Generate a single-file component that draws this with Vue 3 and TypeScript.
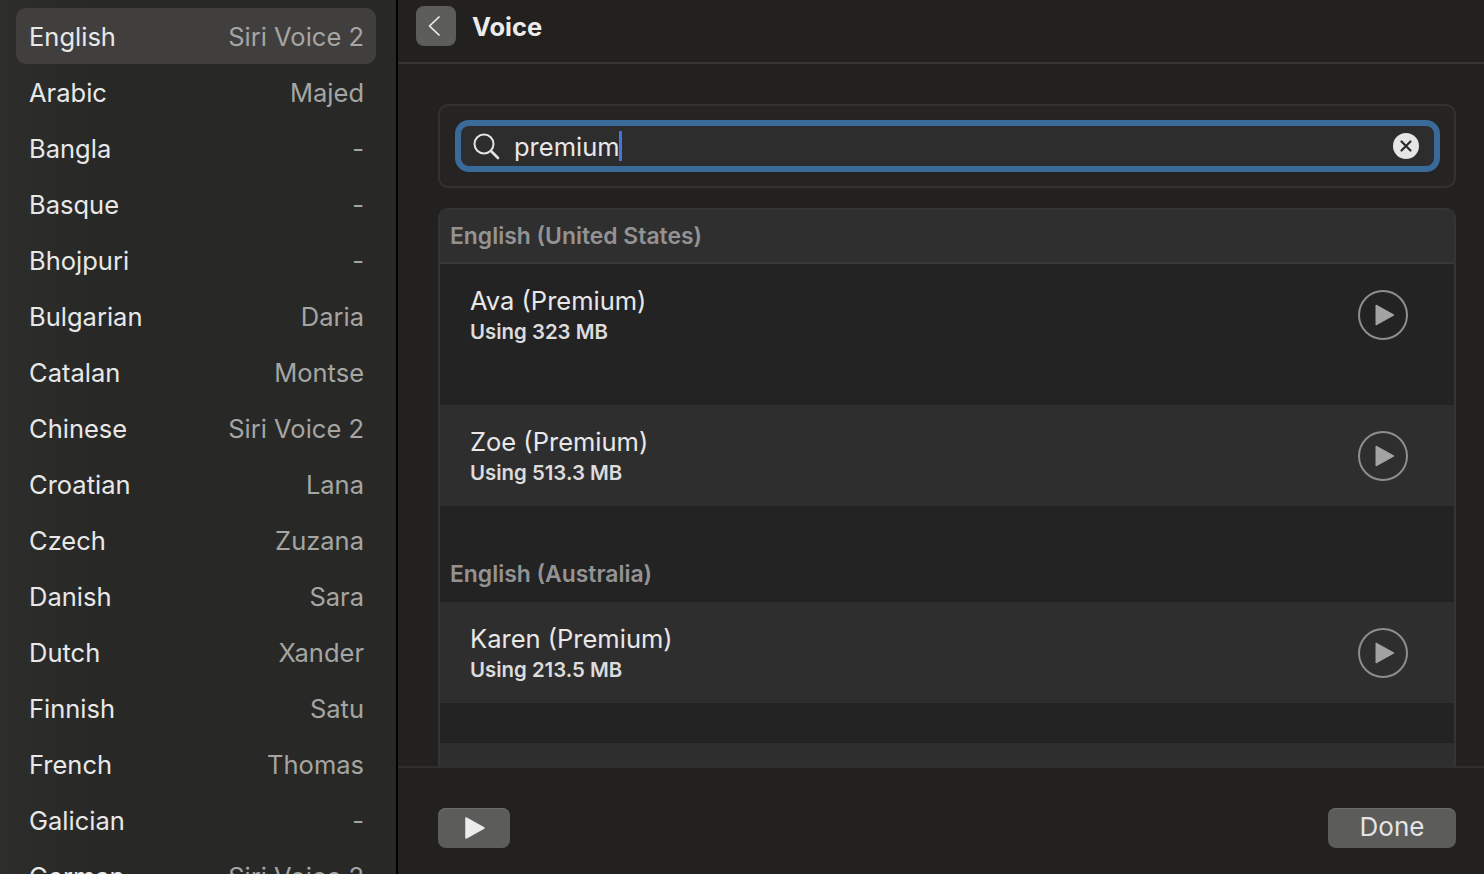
<script setup lang="ts">
interface Language {
  name: string
  voice: string
}

interface Voice {
  name: string
  size: string
  tall?: boolean
  alt?: boolean
}

const languages: Language[] = [
  { name: 'English', voice: 'Siri Voice 2' },
  { name: 'Arabic', voice: 'Majed' },
  { name: 'Bangla', voice: '-' },
  { name: 'Basque', voice: '-' },
  { name: 'Bhojpuri', voice: '-' },
  { name: 'Bulgarian', voice: 'Daria' },
  { name: 'Catalan', voice: 'Montse' },
  { name: 'Chinese', voice: 'Siri Voice 2' },
  { name: 'Croatian', voice: 'Lana' },
  { name: 'Czech', voice: 'Zuzana' },
  { name: 'Danish', voice: 'Sara' },
  { name: 'Dutch', voice: 'Xander' },
  { name: 'Finnish', voice: 'Satu' },
  { name: 'French', voice: 'Thomas' },
  { name: 'Galician', voice: '-' },
  { name: 'German', voice: 'Siri Voice 2' }
]

const usVoices: Voice[] = [
  { name: 'Ava (Premium)', size: 'Using 323 MB', tall: true },
  { name: 'Zoe (Premium)', size: 'Using 513.3 MB', alt: true }
]

const auVoices: Voice[] = [{ name: 'Karen (Premium)', size: 'Using 213.5 MB', alt: true }]
</script>

<template>
  <div class="window">
    <aside class="sidebar">
      <div
        v-for="(lang, i) in languages"
        :key="lang.name"
        class="lang-row"
        :class="{ selected: i === 0 }"
      >
        <span class="lang-name">{{ lang.name }}</span>
        <span class="lang-voice">{{ lang.voice }}</span>
      </div>
    </aside>

    <main class="main">
      <header class="topbar">
        <button class="back-btn" type="button">
          <svg width="14" height="24" viewBox="0 0 14 24" fill="none">
            <path d="M12 3 L2.5 12 L12 21" stroke="#f0f0f0" stroke-width="1.7" stroke-linecap="round" stroke-linejoin="round" />
          </svg>
        </button>
        <h1>Voice</h1>
      </header>

      <div class="content">
        <div class="search-panel">
          <div class="search-field">
            <svg class="search-icon" width="28" height="28" viewBox="0 0 28 28" fill="none">
              <circle cx="12" cy="12" r="9.5" stroke="#e4e4e4" stroke-width="2" />
              <path d="M19 19 L26 26" stroke="#e4e4e4" stroke-width="2.6" stroke-linecap="round" />
            </svg>
            <span class="search-text">premium</span>
            <span class="caret"></span>
            <svg class="clear-icon" width="26" height="26" viewBox="0 0 26 26">
              <circle cx="13" cy="13" r="13" fill="#e6e6e6" />
              <path d="M8.5 8.5 L17.5 17.5 M17.5 8.5 L8.5 17.5" stroke="#2a2a2a" stroke-width="2.2" stroke-linecap="round" />
            </svg>
          </div>
        </div>

        <div class="voice-panel">
          <div class="group-head first">English (United States)</div>
          <div
            v-for="v in usVoices"
            :key="v.name"
            class="voice-row"
            :class="{ tall: v.tall, alt: v.alt }"
          >
            <div class="voice-info">
              <div class="voice-name">{{ v.name }}</div>
              <div class="voice-size">{{ v.size }}</div>
            </div>
            <button class="play-circle" type="button">
              <svg width="20" height="22" viewBox="0 0 20 22">
                <path d="M1 1 L19 11 L1 21 Z" fill="#a3a3a3" stroke="#a3a3a3" stroke-linejoin="round" />
              </svg>
            </button>
          </div>

          <div class="group-head">English (Australia)</div>
          <div v-for="v in auVoices" :key="v.name" class="voice-row alt">
            <div class="voice-info">
              <div class="voice-name">{{ v.name }}</div>
              <div class="voice-size">{{ v.size }}</div>
            </div>
            <button class="play-circle" type="button">
              <svg width="20" height="22" viewBox="0 0 20 22">
                <path d="M1 1 L19 11 L1 21 Z" fill="#a3a3a3" stroke="#a3a3a3" stroke-linejoin="round" />
              </svg>
            </button>
          </div>
          <div class="gap-row"></div>
          <div class="voice-row alt"></div>
        </div>
      </div>

      <footer class="footer">
        <button class="pill play-btn" type="button">
          <svg width="22" height="24" viewBox="0 0 22 24">
            <path d="M2 2 L20 12 L2 22 Z" fill="#ececec" stroke="#ececec" stroke-width="1.5" stroke-linejoin="round" />
          </svg>
        </button>
        <button class="pill done-btn" type="button">Done</button>
      </footer>
    </main>
  </div>
</template>

<style>
html,
body {
  margin: 0;
  background: #222120;
}
</style>

<style scoped>
.window {
  display: flex;
  width: 1484px;
  height: 874px;
  overflow: hidden;
  font-family: Inter, "Liberation Sans", sans-serif;
  color: #e8e8e8;
}

button {
  font-family: inherit;
  border: none;
  padding: 0;
}

.sidebar {
  flex: 0 0 396px;
  box-sizing: border-box;
  padding: 8px 20px 0 16px;
  height: 874px;
  overflow: hidden;
  background: linear-gradient(90deg, #2d2e2c 0%, #282927 25%, #282927 100%);
}

.lang-row {
  display: flex;
  align-items: center;
  justify-content: space-between;
  height: 56px;
  padding: 0 12px 0 13px;
  border-radius: 10px;
  font-size: 25.5px;
}

.lang-row.selected {
  background: #403f3e;
}

.lang-name {
  color: #e8e8e8;
}

.lang-voice {
  color: #a5a5a3;
}

.main {
  flex: 1;
  display: flex;
  flex-direction: column;
  min-width: 0;
  border-left: 2px solid #000;
  background: #222120;
}

.topbar {
  flex: 0 0 64px;
  box-sizing: border-box;
  display: flex;
  align-items: flex-start;
  padding: 6px 0 0 18px;
  gap: 16px;
  border-bottom: 2px solid #363534;
}

.back-btn {
  display: flex;
  align-items: center;
  justify-content: center;
  width: 40px;
  height: 40px;
  padding-right: 4px;
  border-radius: 8px;
  background: #5c5c5b;
}

h1 {
  margin: 1px 0 0;
  font-size: 25.5px;
  font-weight: 700;
  line-height: 40px;
  color: #ececec;
}

.content {
  flex: 0 0 704px;
  box-sizing: border-box;
  padding: 40px 28px 0 40px;
  overflow: hidden;
  border-bottom: 2px solid #302f2f;
}

.search-panel {
  box-sizing: border-box;
  height: 84px;
  padding: 14px 15px 0;
  border: 2px solid #333231;
  border-radius: 10px;
  background: #252423;
}

.search-field {
  box-sizing: border-box;
  display: flex;
  align-items: center;
  width: 985px;
  height: 52px;
  padding: 0 15px 0 11px;
  border: 6px solid #3a6a99;
  border-radius: 14px;
  background: #2e2d2d;
}

.search-field .search-icon {
  margin-right: 14px;
  flex: none;
}

.search-text {
  font-size: 25.5px;
  color: #e8e8e8;
}

.caret {
  width: 3px;
  height: 30px;
  margin-left: -1px;
  background: #3f76e0;
}

.clear-icon {
  margin-left: auto;
  flex: none;
}

.voice-panel {
  box-sizing: border-box;
  margin-top: 20px;
  min-height: 600px;
  border: 2px solid #363535;
  border-bottom: 0;
  border-radius: 10px 10px 0 0;
  background: #242324;
}

.group-head {
  display: flex;
  align-items: center;
  height: 96px;
  box-sizing: border-box;
  padding: 40px 10px 0;
  font-size: 22.9px;
  font-weight: 600;
  color: #949394;
}

.group-head.first {
  height: 54px;
  padding-top: 0;
  background: #302f30;
  border-bottom: 2px solid #393839;
}

.voice-row {
  box-sizing: border-box;
  display: flex;
  align-items: flex-start;
  justify-content: space-between;
  height: 101px;
  padding: 21px 46px 0 30px;
}

.voice-row.tall {
  height: 141px;
}

.voice-row.alt {
  background: #2f2e2f;
}

.gap-row {
  height: 40px;
}

.voice-name {
  font-size: 25.5px;
  line-height: 32px;
  color: #e8e8e8;
}

.voice-size {
  font-size: 20.4px;
  font-weight: 600;
  line-height: 28px;
  margin-top: 1px;
  color: #dcdcdc;
}

.play-circle {
  box-sizing: border-box;
  display: flex;
  align-items: center;
  justify-content: center;
  width: 50px;
  height: 50px;
  margin-top: 5px;
  padding-left: 3px;
  border: 2px solid #8e8e8e;
  border-radius: 50%;
  background: transparent;
}

.footer {
  flex: 1;
  display: flex;
  align-items: flex-start;
  justify-content: space-between;
  padding: 40px 28px 0 40px;
}

.pill {
  height: 40px;
  border-radius: 8px;
  background: #5c5c5b;
  box-shadow: inset 0 1px 0 #6e6e6d;
  display: flex;
  align-items: center;
  justify-content: center;
}

.play-btn {
  width: 72px;
  padding-left: 2px;
}

.done-btn {
  width: 128px;
  padding-bottom: 3px;
  font-size: 26px;
  color: #e4e4e4;
}
</style>
